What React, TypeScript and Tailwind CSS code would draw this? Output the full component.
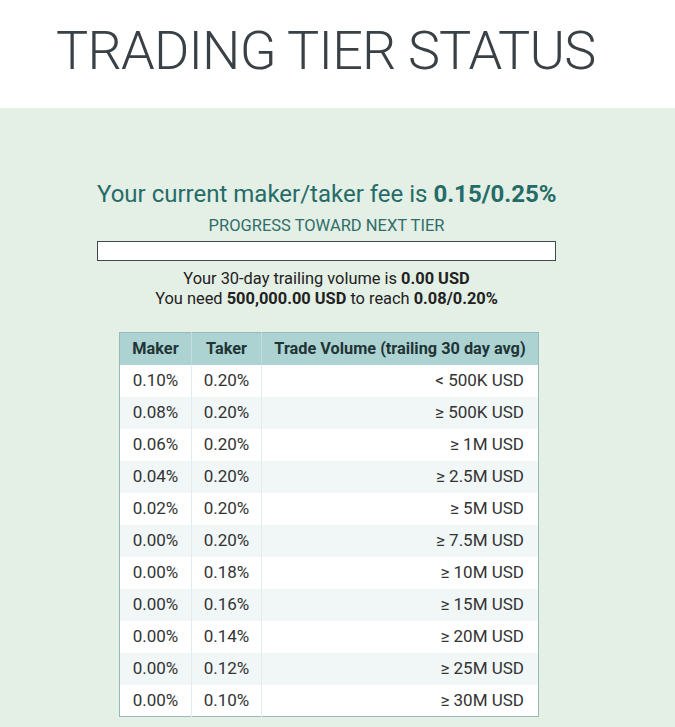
const tiers = [
  ['0.10%', '0.20%', '< 500K USD'],
  ['0.08%', '0.20%', '≥ 500K USD'],
  ['0.06%', '0.20%', '≥ 1M USD'],
  ['0.04%', '0.20%', '≥ 2.5M USD'],
  ['0.02%', '0.20%', '≥ 5M USD'],
  ['0.00%', '0.20%', '≥ 7.5M USD'],
  ['0.00%', '0.18%', '≥ 10M USD'],
  ['0.00%', '0.16%', '≥ 15M USD'],
  ['0.00%', '0.14%', '≥ 20M USD'],
  ['0.00%', '0.12%', '≥ 25M USD'],
  ['0.00%', '0.10%', '≥ 30M USD'],
]

export default function App() {
  return (
    <div className="w-[675px] h-[727px] overflow-hidden bg-[#e4efe5] font-['Roboto',sans-serif]">
      <div className="h-[108px] bg-white pl-[56px] pt-[21px]">
        <h1 className="text-[54px] leading-[60px] font-light text-[#3a4146] tracking-[-0.8px] whitespace-nowrap">
          TRADING TIER STATUS
        </h1>
      </div>

      <div className="ml-[97px] w-[459px] pt-[70px]">
        <p className="text-center text-[24px] leading-[32px] text-[#256c68] whitespace-nowrap">
          Your current maker/taker fee is <b className="font-bold">0.15/0.25%</b>
        </p>
        <p className="text-center text-[16.5px] leading-[20px] mt-[6px] text-[#2f6e6a]">PROGRESS TOWARD NEXT TIER</p>
        <div className="mt-[5px] h-[20px] bg-white border border-[#3f4a4a]"></div>
        <div className="mt-[8px] text-center text-[16.4px] leading-[20px] text-[#222]">
          <p>Your 30-day trailing volume is <b className="font-bold">0.00 USD</b></p>
          <p>You need <b className="font-bold">500,000.00 USD</b> to reach <b className="font-bold">0.08/0.20%</b></p>
        </div>

        <table className="mt-[23px] ml-[22px] w-[420px] border-collapse border border-[#97b9b9] text-[17px]">
          <thead>
            <tr className="bg-[#acd2d2] h-[32px] text-[16.3px] text-[#1f3535]">
              <th className="w-[72px] font-bold border-r border-[#c4dcdc]">Maker</th>
              <th className="w-[70px] font-bold border-r border-[#c4dcdc]">Taker</th>
              <th className="font-bold whitespace-nowrap">Trade Volume (trailing 30 day avg)</th>
            </tr>
          </thead>
          <tbody>
            {tiers.map((t, i) => (
              <tr key={i} className={`h-[32px] text-[#333] ${i % 2 ? 'bg-[#f1f6f6]' : 'bg-white'}`}>
                <td className="text-center border-r border-[#e2ecec]">{t[0]}</td>
                <td className="text-center border-r border-[#e2ecec]">{t[1]}</td>
                <td className="text-right pr-[14px]">{t[2]}</td>
              </tr>
            ))}
          </tbody>
        </table>
      </div>
    </div>
  )
}
